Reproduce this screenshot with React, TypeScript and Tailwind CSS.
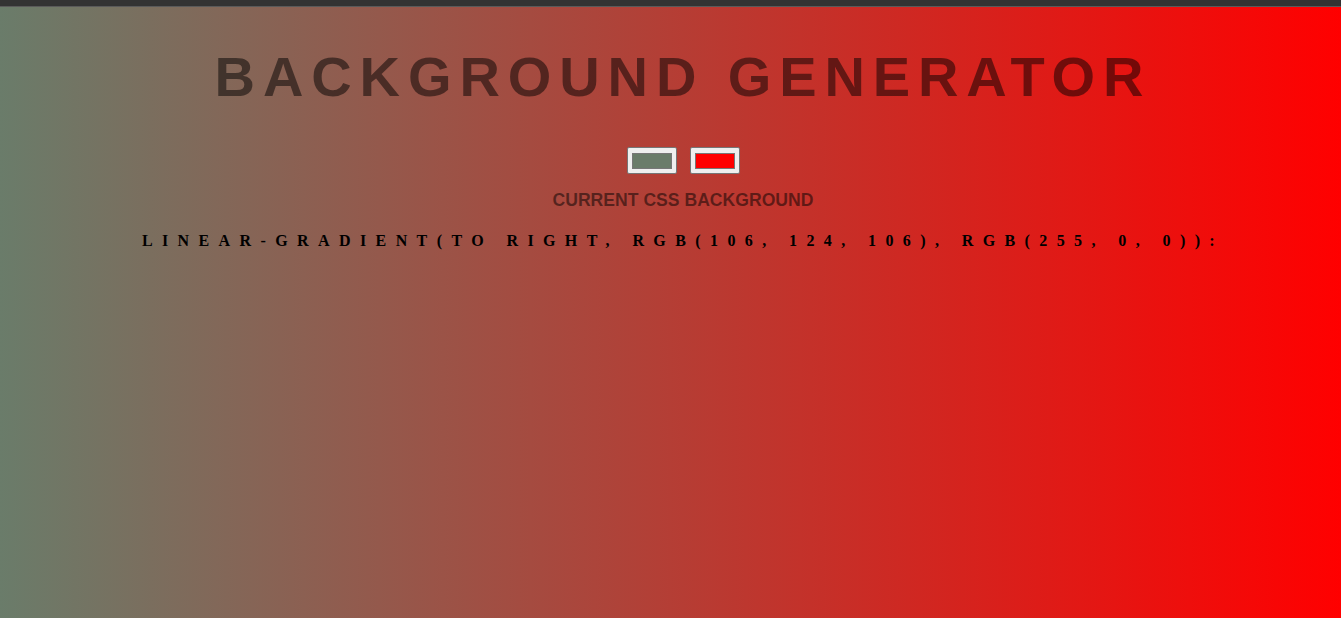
import React from "react"

function Swatch({ color }: { color: string }) {
    return (
        <div className="w-[50px] h-[27px] bg-[#efefef] border border-[#767676] rounded-[2px] flex items-center justify-center">
            <div className={`w-[40px] h-[16px] border border-[#777777] ${color}`} />
        </div>
    )
}

export default function App() {
    return (
        <div className="w-[1341px] h-[618px] overflow-hidden flex flex-col">
            <div className="h-[7px] bg-[#333333] border-b border-[#5a5a5a] shrink-0" />
            <div className="flex-1 bg-[linear-gradient(to_right,rgb(106,124,106),rgb(255,0,0))] overflow-hidden">
                <div className="w-[1366px] flex flex-col items-center text-center">
                    <h1 className="mt-[38px] font-['Liberation_Sans',Arial,sans-serif] font-bold text-[56px] leading-[64px] tracking-[7.9px] text-black/50">
                        BACKGROUND GENERATOR
                    </h1>
                    <div className="mt-[38px] flex flex-row gap-x-[13px]">
                        <Swatch color="bg-[#6a7c6a]" />
                        <Swatch color="bg-[#ff0000]" />
                    </div>
                    <h3 className="mt-[16px] font-['Liberation_Sans',Arial,sans-serif] font-bold text-[17.6px] leading-[20px] text-black/50">
                        CURRENT CSS BACKGROUND
                    </h3>
                    <h3 className="mt-[22px] font-['Liberation_Serif','Times_New_Roman',serif] font-bold text-[16px] leading-[18px] tracking-[9.4px] text-black">
                        LINEAR-GRADIENT(TO RIGHT, RGB(106, 124, 106), RGB(255, 0, 0)):
                    </h3>
                </div>
            </div>
        </div>
    )
}
